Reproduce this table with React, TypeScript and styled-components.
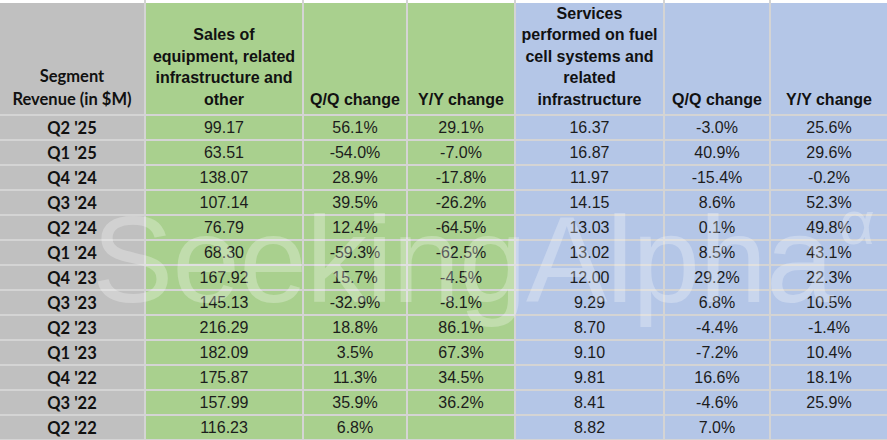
import React from "react";
import styled, { createGlobalStyle } from "styled-components";

const Global = createGlobalStyle`
  html, body { margin: 0; padding: 0; background: #ffffff; }
  body { width: 887px; height: 440px; overflow: hidden; }
`;

type Tone = "gray" | "green" | "blue";

const toneColor: Record<Tone, string> = {
  gray: "#c0c0c0",
  green: "#a9d08e",
  blue: "#b4c6e7",
};

const Frame = styled.div`
  position: relative;
  width: 887px;
  height: 440px;
  overflow: hidden;
  background: #ffffff;
`;

const Sheet = styled.div`
  display: grid;
  grid-template-columns: 146px 158px 104px 108px 149px 106px 116px;
  grid-template-rows: 3px 113px repeat(13, 25px);
`;

const Strip = styled.div<{ $last?: boolean }>`
  background: #ffffff;
  border-right: ${(p) => (p.$last ? "none" : "2px solid #d4d4d4")};
`;

const Cell = styled.div<{ $tone: Tone; $last?: boolean }>`
  background: ${(p) => toneColor[p.$tone]};
  border-right: ${(p) => (p.$last ? "none" : "2px solid #d4d4d4")};
  border-bottom: 2px solid #d4d4d4;
  display: flex;
  align-items: center;
  justify-content: center;
  text-align: center;
  overflow: hidden;
`;

const HeadCell = styled(Cell)`
  align-items: flex-end;
  padding: 0 4px 4px;
`;

const HeadText = styled.span`
  font-family: "Liberation Sans", Arial, sans-serif;
  font-weight: 700;
  font-size: 16px;
  line-height: 21.5px;
  color: #111111;
`;

const SegHeadText = styled.span`
  font-family: Lato, "Open Sans", sans-serif;
  font-weight: 700;
  font-size: 16.5px;
  line-height: 22.5px;
  color: #111111;
  white-space: nowrap;
`;

const LabelText = styled.span`
  font-family: Lato, "Open Sans", sans-serif;
  font-weight: 700;
  font-size: 16.5px;
  color: #111111;
  padding-top: 1px;
`;

const ValueText = styled.span`
  font-family: "Liberation Sans", Arial, sans-serif;
  font-size: 16px;
  color: #1c1c1c;
  padding-top: 1px;
`;

const Watermark = styled.div`
  position: absolute;
  left: 92px;
  top: 192px;
  font-family: "Liberation Sans", Arial, sans-serif;
  font-size: 122px;
  line-height: 1;
  color: rgba(255, 255, 255, 0.28);
  white-space: nowrap;
  pointer-events: none;
  letter-spacing: -1px;
`;

const Sup = styled.span`
  font-size: 62px;
  vertical-align: 58px;
  margin-left: 6px;
`;

const tones: Tone[] = ["gray", "green", "green", "green", "blue", "blue", "blue"];

const headers = [
  "Sales of equipment, related infrastructure and other",
  "Q/Q change",
  "Y/Y change",
  "Services performed on fuel cell systems and related infrastructure",
  "Q/Q change",
  "Y/Y change",
];

const rows: string[][] = [
  ["Q2 '25", "99.17", "56.1%", "29.1%", "16.37", "-3.0%", "25.6%"],
  ["Q1 '25", "63.51", "-54.0%", "-7.0%", "16.87", "40.9%", "29.6%"],
  ["Q4 '24", "138.07", "28.9%", "-17.8%", "11.97", "-15.4%", "-0.2%"],
  ["Q3 '24", "107.14", "39.5%", "-26.2%", "14.15", "8.6%", "52.3%"],
  ["Q2 '24", "76.79", "12.4%", "-64.5%", "13.03", "0.1%", "49.8%"],
  ["Q1 '24", "68.30", "-59.3%", "-62.5%", "13.02", "8.5%", "43.1%"],
  ["Q4 '23", "167.92", "15.7%", "-4.5%", "12.00", "29.2%", "22.3%"],
  ["Q3 '23", "145.13", "-32.9%", "-8.1%", "9.29", "6.8%", "10.5%"],
  ["Q2 '23", "216.29", "18.8%", "86.1%", "8.70", "-4.4%", "-1.4%"],
  ["Q1 '23", "182.09", "3.5%", "67.3%", "9.10", "-7.2%", "10.4%"],
  ["Q4 '22", "175.87", "11.3%", "34.5%", "9.81", "16.6%", "18.1%"],
  ["Q3 '22", "157.99", "35.9%", "36.2%", "8.41", "-4.6%", "25.9%"],
  ["Q2 '22", "116.23", "6.8%", "", "8.82", "7.0%", ""],
];

export default function App() {
  return (
    <>
      <Global />
      <Frame>
        <Sheet>
          {tones.map((_, i) => (
            <Strip key={`s${i}`} $last={i === 6} />
          ))}
          <HeadCell $tone="gray">
            <SegHeadText>
              Segment
              <br />
              Revenue (in $M)
            </SegHeadText>
          </HeadCell>
          {headers.map((h, i) => (
            <HeadCell key={`h${i}`} $tone={tones[i + 1]} $last={i === 5}>
              <HeadText>{h}</HeadText>
            </HeadCell>
          ))}
          {rows.map((r, ri) =>
            r.map((v, ci) => (
              <Cell key={`${ri}-${ci}`} $tone={tones[ci]} $last={ci === 6}>
                {ci === 0 ? <LabelText>{v}</LabelText> : <ValueText>{v}</ValueText>}
              </Cell>
            ))
          )}
        </Sheet>
        <Watermark aria-hidden="true">
          SeekingAlpha<Sup>α</Sup>
        </Watermark>
      </Frame>
    </>
  );
}
